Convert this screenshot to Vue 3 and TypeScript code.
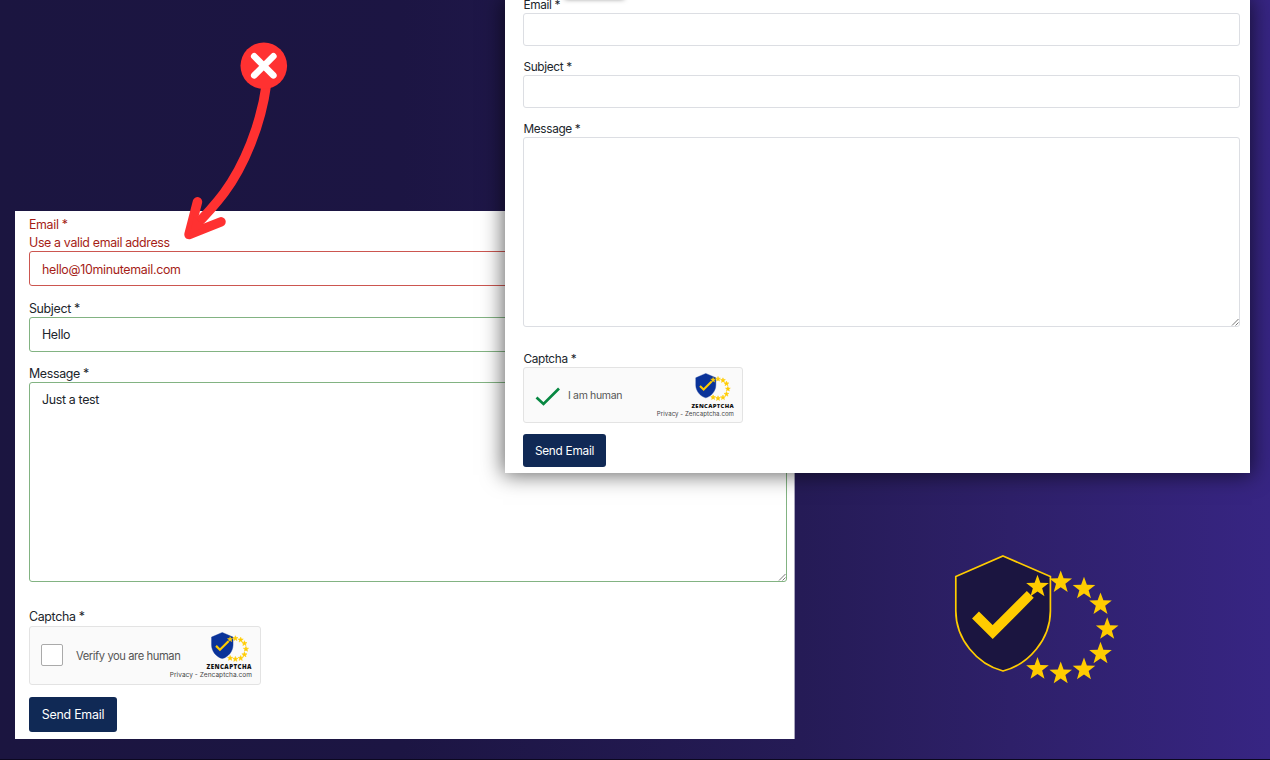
<script setup lang="ts">
interface Star { x: number; y: number }

const stars: Star[] = [
  { x: 97.5, y: 46.7 },
  { x: 120.7, y: 42.3 },
  { x: 144, y: 48.7 },
  { x: 160.5, y: 64.3 },
  { x: 167.2, y: 89.2 },
  { x: 160.5, y: 113.7 },
  { x: 144, y: 129.5 },
  { x: 120.7, y: 133.5 },
  { x: 97.5, y: 129 },
]

const starPoints: string = Array.from({ length: 10 }, (_, i) => {
  const r = i % 2 === 0 ? 11.9 : 4.9
  const a = (Math.PI / 5) * i - Math.PI / 2
  return `${(r * Math.cos(a)).toFixed(2)},${(r * Math.sin(a)).toFixed(2)}`
}).join(' ')
</script>

<template>
  <main class="scene">
    <svg class="defs" width="0" height="0" aria-hidden="true">
      <symbol id="brand" viewBox="14 14 166 132">
        <path class="shield" d="M63 16 L110.4 36.5 V71 C110.4 99 89 124.500 63 131 C37 124.500 15.800 99 15.800 71 V36.500 Z" />
        <path class="tick" d="M35.500 75 L52.700 92 L90.300 54.400" />
        <polygon v-for="(s, i) in stars" :key="i" class="star" :points="starPoints" :transform="`translate(${s.x} ${s.y})`" />
      </symbol>
      <symbol id="grip" viewBox="0 0 8 8">
        <path d="M1 7.500 L7.500 1 M4.500 7.500 L7.500 4.500" fill="none" stroke="#777" stroke-width="1" />
      </symbol>
    </svg>

    <section class="panel rejected">
      <div class="field invalid">
        <label>Email *</label>
        <p class="hint">Use a valid email address</p>
        <div class="input">hello@10minutemail.com</div>
      </div>
      <div class="field valid">
        <label>Subject *</label>
        <div class="input">Hello</div>
      </div>
      <div class="field valid message">
        <label>Message *</label>
        <div class="input area">Just a test<svg class="grip"><use href="#grip" /></svg></div>
      </div>
      <div class="field">
        <label>Captcha *</label>
        <div class="captcha">
          <span class="box"></span>
          <span class="prompt">Verify you are human</span>
          <div class="credit">
            <svg class="logo"><use href="#brand" /></svg>
            <strong>ZENCAPTCHA</strong>
            <small>Privacy - Zencaptcha.com</small>
          </div>
        </div>
      </div>
      <button type="button">Send Email</button>
    </section>

    <section class="panel accepted">
      <div class="toast"></div>
      <div class="field first">
        <label>Email *</label>
        <div class="input"></div>
      </div>
      <div class="field">
        <label>Subject *</label>
        <div class="input"></div>
      </div>
      <div class="field message">
        <label>Message *</label>
        <div class="input area"><svg class="grip"><use href="#grip" /></svg></div>
      </div>
      <div class="field">
        <label>Captcha *</label>
        <div class="captcha">
          <svg class="done" viewBox="0 0 26 20"><path d="M1.500 10.500 L8.500 17 L24 1.500" /></svg>
          <span class="prompt">I am human</span>
          <div class="credit">
            <svg class="logo"><use href="#brand" /></svg>
            <strong>ZENCAPTCHA</strong>
            <small>Privacy - Zencaptcha.com</small>
          </div>
        </div>
      </div>
      <button type="button">Send Email</button>
    </section>

    <svg class="arrow" viewBox="0 0 140 220">
      <path class="shaft" d="M96.500 54 C91 95 74 136 54 163 C45 175 34 187 22 199" />
      <path class="head" d="M27.500 171.800 L19 204.500 L51 191.800" />
      <path class="head-fill" d="M24 186 L20 204 L36 196 L30 193 Z" />
      <circle cx="93.800" cy="35.800" r="23.300" />
      <path class="cross" d="M84.200 26.300 L103.400 45.400 M103.400 26.300 L84.200 45.400" />
    </svg>

    <svg class="emblem"><use href="#brand" /></svg>
  </main>
</template>

<style>
body {
  margin: 0;
  overflow: hidden;
}
</style>

<style scoped>
.scene {
  position: relative;
  width: 1270px;
  height: 760px;
  overflow: hidden;
  box-sizing: border-box;
  border-bottom: 1px solid #0c0820;
  background: linear-gradient(90deg, #1b1540 0, #1c1543 400px, #251b56 800px, #2e2069 1010px, #372583 1270px);
  font-family: Inter, "Liberation Sans", sans-serif;
  color: #20252b;
}
.defs {
  position: absolute;
}
.panel {
  position: absolute;
  box-sizing: border-box;
  background: #fff;
  letter-spacing: -.34px;
}
label,
.hint {
  display: block;
  margin: 0;
  white-space: nowrap;
}
.input {
  position: relative;
  box-sizing: border-box;
  border: 1px solid #dcdee3;
  border-radius: 3px;
  background: #fff;
}
.grip {
  position: absolute;
  right: 0;
  bottom: 0;
  width: 8px;
  height: 8px;
}
.captcha {
  box-sizing: border-box;
  display: flex;
  align-items: center;
  border: 1px solid #e3e3e3;
  border-radius: 3px;
  background: #fafafa;
  color: #555;
}
.prompt {
  flex: none;
  white-space: nowrap;
}
.credit {
  width: 46px;
  margin-left: auto;
  align-self: stretch;
  display: flex;
  flex-direction: column;
  align-items: flex-end;
  white-space: nowrap;
}
.credit strong {
  font-family: "Open Sans", sans-serif;
  font-weight: 800;
  color: #111;
}
.credit small {
  color: #444;
}
.logo {
  --shield: #0a3399;
  --edge: #0a3399;
  --star-edge: 2.500;
  flex: none;
}
.shield {
  fill: var(--shield);
  stroke: var(--edge);
  stroke-width: 1.700;
}
.tick {
  fill: none;
  stroke: #fc0;
  stroke-width: 9.800;
}
.star {
  fill: #fc0;
  stroke: #fc0;
  stroke-width: var(--star-edge);
}
button {
  display: block;
  box-sizing: border-box;
  padding: 0;
  border: 0;
  border-radius: 3px;
  background: #102955;
  color: #fff;
  font-family: inherit;
  letter-spacing: -.25px;
}

.rejected {
  left: 15px;
  top: 211px;
  width: 780px;
  height: 528px;
  padding: 5px 7px 0 14px;
  font-size: 12.400px;
  border-right: 1px solid #a9a5bd;
}
.rejected label,
.rejected .hint {
  height: 18px;
  line-height: 18px;
}
.rejected .input {
  height: 35px;
  padding-left: 12px;
  line-height: 34px;
}
.rejected .invalid .input {
  margin-top: -1px;
  line-height: 35px;
  letter-spacing: -.3px;
  border-color: #cc5650;
}
.rejected .field {
  margin-bottom: 13px;
}
.rejected .invalid {
  margin-bottom: 14px;
}
.rejected .valid .input {
  margin-top: -1px;
  border-color: #82b382;
}
.rejected .message .area {
  height: 200px;
}
.rejected .message {
  margin-bottom: 26px;
}
.invalid {
  color: #a51d16;
}
.rejected .captcha {
  width: 232px;
  height: 59px;
  padding: 0 8px 0 11px;
}
.box {
  flex: none;
  box-sizing: border-box;
  width: 22px;
  height: 22px;
  margin: 0 13px 2px 0;
  border: 1px solid #aaa;
  border-radius: 2px;
  background: #fff;
}
.rejected .prompt {
  font-size: 11.200px;
  letter-spacing: -.42px;
}
.rejected .credit {
  padding-top: 5px;
}
.rejected .logo {
  width: 38px;
  height: 30px;
  margin-right: 3px;
}
.rejected strong {
  margin-top: 1px;
  font-size: 6.100px;
  line-height: 8px;
  letter-spacing: .45px;
}
.rejected small {
  font-size: 6.500px;
  line-height: 9px;
  letter-spacing: .05px;
}
.rejected button {
  width: 88px;
  height: 35px;
  margin-top: -1px;
  font-size: 12.400px;
}

.accepted {
  left: 505px;
  top: 0;
  width: 745px;
  height: 473px;
  padding: 0 10px 0 18px;
  font-size: 11.800px;
  box-shadow: 0 0 20px 2px rgba(0, 0, 0, .6);
}
.toast {
  position: absolute;
  left: 60px;
  top: -10px;
  width: 59px;
  height: 9px;
  box-shadow: 0 0 5px rgba(0, 0, 0, .5);
}
.accepted label {
  height: 17px;
  padding-left: .5px;
  line-height: 19px;
}
.accepted .first label {
  margin-top: -4px;
}
.accepted .input {
  height: 33px;
}
.accepted .field {
  margin-bottom: 12px;
}
.accepted .area {
  height: 190px;
}
.accepted .message {
  margin-bottom: 23px;
}
.accepted .captcha {
  width: 220px;
  height: 56px;
  padding: 0 8px 0 11px;
}
.done {
  flex: none;
  width: 26px;
  height: 20px;
  margin: 3px 7px 0 0;
}
.done path {
  fill: none;
  stroke: #078842;
  stroke-width: 2.700;
}
.accepted .prompt {
  font-size: 10.500px;
}
.accepted .credit {
  padding-top: 5px;
}
.accepted .logo {
  width: 36px;
  height: 28px;
  margin-right: 3px;
}
.accepted strong {
  margin-top: 1px;
  font-size: 5.800px;
  line-height: 8px;
  letter-spacing: .35px;
}
.accepted small {
  font-size: 6.100px;
  line-height: 8px;
  letter-spacing: .05px;
}
.accepted button {
  width: 83px;
  height: 33px;
  margin-top: -1px;
  font-size: 11.800px;
}

.arrow {
  position: absolute;
  left: 170px;
  top: 30px;
  width: 140px;
  height: 220px;
}
.arrow circle,
.head-fill {
  fill: #ff3131;
}
.shaft,
.head,
.cross {
  fill: none;
  stroke: #ff3131;
  stroke-width: 9.500;
  stroke-linecap: round;
  stroke-linejoin: round;
}
.cross {
  stroke: #fff;
  stroke-width: 6.500;
}
.emblem {
  --shield: #1b1540;
  --edge: #fc0;
  --star-edge: 0;
  position: absolute;
  left: 954px;
  top: 554px;
  width: 166px;
  height: 132px;
}
</style>
